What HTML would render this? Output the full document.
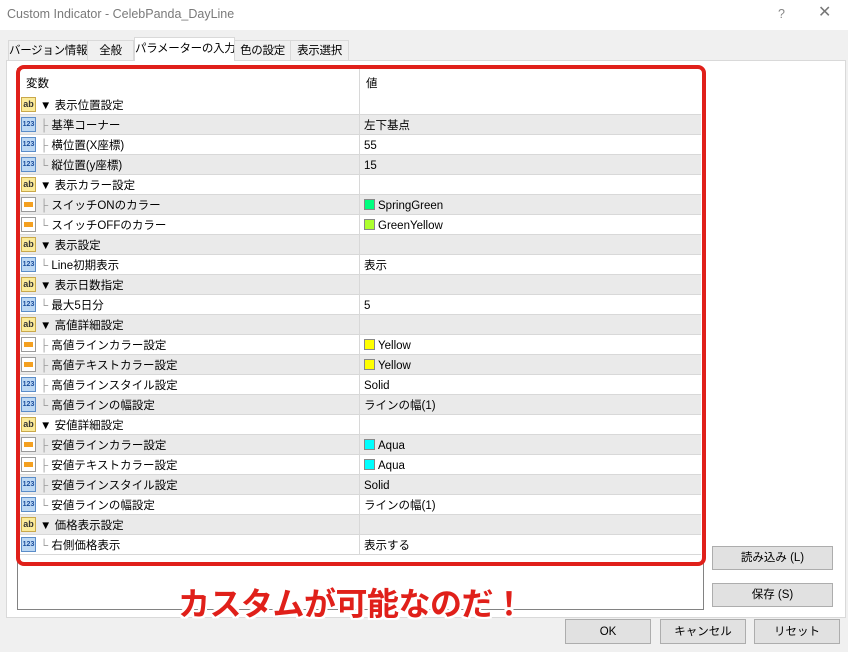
<!DOCTYPE html>
<html><head><meta charset="utf-8"><style>
*{margin:0;padding:0;box-sizing:border-box}
body{width:848px;height:652px;background:#f0f0f0;position:relative;overflow:hidden;font-family:"Liberation Sans","Noto Sans CJK JP",sans-serif;font-size:11.5px;color:#000;line-height:1.2}
.title{position:absolute;left:0;top:0;width:848px;height:30px;background:#fff}
.title span{position:absolute;left:7px;top:7px;color:#7a7a7a;font-size:12.5px;line-height:15px}
.title .q{left:778px;top:7px;color:#888}
.title .x{left:818px;top:5px;color:#777;font-size:16px;font-weight:100}
.tab{position:absolute;top:40px;height:20px;border:1px solid #d9d9d9;border-bottom:none;background:#f0f0f0;font-size:11.5px;line-height:20px;text-align:center;white-space:nowrap;overflow:hidden;letter-spacing:-0.3px}
.tab.act{top:37px;height:24px;line-height:22px;background:#fff}
.panel{position:absolute;left:6px;top:60px;width:840px;height:558px;background:#fff;border:1px solid #d9d9d9}
.list{position:absolute;left:17px;top:68px;width:687px;height:542px;border:1px solid #828282;background:#fff}
.hdr{position:absolute;left:18px;top:69px;width:684px;height:26px;line-height:26px}
.hdr span{position:absolute;top:2px}
.row{position:absolute;left:18px;width:683px;height:20px;border-bottom:1px solid #d8d8d8;line-height:19px}
.row.g{background:#eaeaea}
.row .n{position:absolute;left:22px;top:2px;white-space:nowrap}
.row .v{position:absolute;left:346px;top:2px;white-space:nowrap}
.row .v i{display:inline-block;width:11px;height:11px;margin-right:3px;vertical-align:-1px;border:1px solid #888}
.row .d{position:absolute;left:341px;top:0;width:1px;height:20px;background:#d8d8d8}
.hdr .d{position:absolute;left:341px;top:0;width:1px;height:26px;background:#d8d8d8}
.ic{position:absolute;left:3px;top:2px;width:15px;height:15px;line-height:13px;text-align:center;font-weight:bold}
.ab{background:#fbeb9a;border:1px solid #c9a84a;color:#333;font-size:9px}
.nm{background:#bcd8f4;border:1px solid #5a8cc8;color:#1a4d9c;font-size:7px}
.cl{background:#fff;border:1px solid #999}
.cl:after{content:"";position:absolute;left:2px;top:4px;width:9px;height:5px;background:#f4a020}
.tr{color:#999}
.red{position:absolute;left:16px;top:65px;width:690px;height:501px;border:4px solid #e0201a;border-radius:8px}
.btn{position:absolute;background:#e1e1e1;border:1px solid #adadad;text-align:center;font-size:11.5px}
.big{position:absolute;left:178px;top:584px;font-size:32px;line-height:40px;font-weight:bold;color:#e0201a;white-space:nowrap;text-shadow:2px 0 #fff,-2px 0 #fff,0 2px #fff,0 -2px #fff,2px 2px #fff,-2px -2px #fff,2px -2px #fff,-2px 2px #fff;letter-spacing:-0.5px}
</style></head><body>
<div class="title"><span>Custom Indicator - CelebPanda_DayLine</span><span class="q">?</span><span class="x">✕</span></div>
<div class="panel"></div>
<div class="tab" style="left:8px;width:80px">バージョン情報</div>
<div class="tab" style="left:87px;width:47px">全般</div>
<div class="tab act" style="left:134px;width:101px">パラメーターの入力</div>
<div class="tab" style="left:234px;width:57px">色の設定</div>
<div class="tab" style="left:290px;width:59px">表示選択</div>
<div class="list"></div>
<div class="hdr"><span style="left:8px">変数</span><span style="left:348px">値</span><div class="d"></div></div>

<div class="row" style="top:95px"><div class="ic ab">ab</div><span class="n">▼ 表示位置設定</span><div class="d"></div></div>
<div class="row g" style="top:115px"><div class="ic nm">123</div><span class="n"><span class="tr">├ </span>基準コーナー</span><div class="d"></div><span class="v">左下基点</span></div>
<div class="row" style="top:135px"><div class="ic nm">123</div><span class="n"><span class="tr">├ </span>横位置(X座標)</span><div class="d"></div><span class="v">55</span></div>
<div class="row g" style="top:155px"><div class="ic nm">123</div><span class="n"><span class="tr">└ </span>縦位置(y座標)</span><div class="d"></div><span class="v">15</span></div>
<div class="row" style="top:175px"><div class="ic ab">ab</div><span class="n">▼ 表示カラー設定</span><div class="d"></div></div>
<div class="row g" style="top:195px"><div class="ic cl"></div><span class="n"><span class="tr">├ </span>スイッチONのカラー</span><div class="d"></div><span class="v"><i style="background:#00ff7f"></i>SpringGreen</span></div>
<div class="row" style="top:215px"><div class="ic cl"></div><span class="n"><span class="tr">└ </span>スイッチOFFのカラー</span><div class="d"></div><span class="v"><i style="background:#adff2f"></i>GreenYellow</span></div>
<div class="row g" style="top:235px"><div class="ic ab">ab</div><span class="n">▼ 表示設定</span><div class="d"></div></div>
<div class="row" style="top:255px"><div class="ic nm">123</div><span class="n"><span class="tr">└ </span>Line初期表示</span><div class="d"></div><span class="v">表示</span></div>
<div class="row g" style="top:275px"><div class="ic ab">ab</div><span class="n">▼ 表示日数指定</span><div class="d"></div></div>
<div class="row" style="top:295px"><div class="ic nm">123</div><span class="n"><span class="tr">└ </span>最大5日分</span><div class="d"></div><span class="v">5</span></div>
<div class="row g" style="top:315px"><div class="ic ab">ab</div><span class="n">▼ 高値詳細設定</span><div class="d"></div></div>
<div class="row" style="top:335px"><div class="ic cl"></div><span class="n"><span class="tr">├ </span>高値ラインカラー設定</span><div class="d"></div><span class="v"><i style="background:#ffff00"></i>Yellow</span></div>
<div class="row g" style="top:355px"><div class="ic cl"></div><span class="n"><span class="tr">├ </span>高値テキストカラー設定</span><div class="d"></div><span class="v"><i style="background:#ffff00"></i>Yellow</span></div>
<div class="row" style="top:375px"><div class="ic nm">123</div><span class="n"><span class="tr">├ </span>高値ラインスタイル設定</span><div class="d"></div><span class="v">Solid</span></div>
<div class="row g" style="top:395px"><div class="ic nm">123</div><span class="n"><span class="tr">└ </span>高値ラインの幅設定</span><div class="d"></div><span class="v">ラインの幅(1)</span></div>
<div class="row" style="top:415px"><div class="ic ab">ab</div><span class="n">▼ 安値詳細設定</span><div class="d"></div></div>
<div class="row g" style="top:435px"><div class="ic cl"></div><span class="n"><span class="tr">├ </span>安値ラインカラー設定</span><div class="d"></div><span class="v"><i style="background:#00ffff"></i>Aqua</span></div>
<div class="row" style="top:455px"><div class="ic cl"></div><span class="n"><span class="tr">├ </span>安値テキストカラー設定</span><div class="d"></div><span class="v"><i style="background:#00ffff"></i>Aqua</span></div>
<div class="row g" style="top:475px"><div class="ic nm">123</div><span class="n"><span class="tr">├ </span>安値ラインスタイル設定</span><div class="d"></div><span class="v">Solid</span></div>
<div class="row" style="top:495px"><div class="ic nm">123</div><span class="n"><span class="tr">└ </span>安値ラインの幅設定</span><div class="d"></div><span class="v">ラインの幅(1)</span></div>
<div class="row g" style="top:515px"><div class="ic ab">ab</div><span class="n">▼ 価格表示設定</span><div class="d"></div></div>
<div class="row" style="top:535px"><div class="ic nm">123</div><span class="n"><span class="tr">└ </span>右側価格表示</span><div class="d"></div><span class="v">表示する</span></div>

<div class="red"></div>
<div class="big">カスタムが可能なのだ！</div>

<div class="btn" style="left:712px;top:546px;width:121px;height:24px;line-height:23px">読み込み (L)</div>
<div class="btn" style="left:712px;top:583px;width:121px;height:24px;line-height:23px">保存 (S)</div>
<div class="btn" style="left:565px;top:619px;width:86px;height:25px;line-height:24px">OK</div>
<div class="btn" style="left:660px;top:619px;width:86px;height:25px;line-height:24px">キャンセル</div>
<div class="btn" style="left:754px;top:619px;width:86px;height:25px;line-height:24px">リセット</div>
</body></html>
